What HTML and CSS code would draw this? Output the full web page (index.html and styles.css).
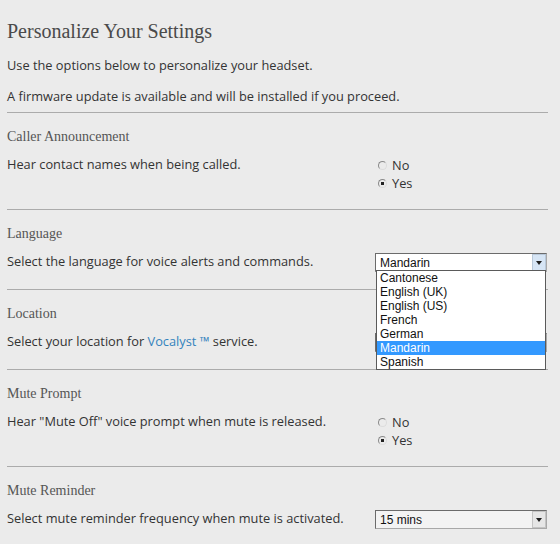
FILE: index.html
```html
<!DOCTYPE html>
<html lang="en">
<head>
  <meta charset="UTF-8">
  <title>Personalize Your Settings</title>
  <link rel="stylesheet" href="styles.css">
</head>
<body>
  <div class="page">

    <!-- Cabeçalho -->
    <div class="intro">
      <h1>Personalize Your Settings</h1>
      <p>Use the options below to personalize your headset.</p>
      <p>A firmware update is available and will be installed if you proceed.</p>
    </div>

    <!-- Caller Announcement -->
    <div class="setting">
      <h2>Caller Announcement</h2>
      <div class="setting-row">
        <span class="desc">Hear contact names when being called.</span>
        <div class="control radios">
          <label><input type="radio" name="caller"> No</label>
          <label><input type="radio" name="caller" checked> Yes</label>
        </div>
      </div>
    </div>

    <!-- Language -->
    <div class="setting">
      <h2>Language</h2>
      <div class="setting-row">
        <span class="desc">Select the language for voice alerts and commands.</span>
        <div class="control">
          <div class="select open">
            <span class="select-value">Mandarin</span>
            <span class="select-arrow"></span>
            <ul class="select-list">
              <li>Cantonese</li>
              <li>English (UK)</li>
              <li>English (US)</li>
              <li>French</li>
              <li>German</li>
              <li class="selected">Mandarin</li>
              <li>Spanish</li>
            </ul>
          </div>
        </div>
      </div>
    </div>

    <!-- Location (o select fica por baixo da lista aberta) -->
    <div class="setting">
      <h2>Location</h2>
      <div class="setting-row">
        <span class="desc">Select your location for <a href="#">Vocalyst ™</a> service.</span>
        <div class="control">
          <div class="select">
            <span class="select-value"></span>
            <span class="select-arrow"></span>
          </div>
        </div>
      </div>
    </div>

    <!-- Mute Prompt -->
    <div class="setting">
      <h2>Mute Prompt</h2>
      <div class="setting-row">
        <span class="desc">Hear "Mute Off" voice prompt when mute is released.</span>
        <div class="control radios">
          <label><input type="radio" name="mute-prompt"> No</label>
          <label><input type="radio" name="mute-prompt" checked> Yes</label>
        </div>
      </div>
    </div>

    <!-- Mute Reminder -->
    <div class="setting">
      <h2>Mute Reminder</h2>
      <div class="setting-row">
        <span class="desc">Select mute reminder frequency when mute is activated.</span>
        <div class="control">
          <div class="select plain">
            <span class="select-value">15 mins</span>
            <span class="select-arrow"></span>
          </div>
        </div>
      </div>
    </div>

  </div>
</body>
</html>
```

FILE: styles.css
```css
/* Estilos globais */
* {
  margin: 0;
  padding: 0;
  box-sizing: border-box;
}

body {
  background-color: #ebebeb;
  color: #333333;
  font-family: 'Open Sans', sans-serif;
  font-size: 12.8px;
  overflow: hidden;
}

.page {
  padding: 19px 12px 0 7px;
}

.intro {
  padding-bottom: 7px;
}

.intro h1 {
  font-family: 'Liberation Serif', serif;
  font-weight: normal;
  font-size: 20px;
  line-height: 24px;
  color: #4a4a4a;
  margin-bottom: 1px;
}

.intro p {
  line-height: 18px;
  margin-top: 13px;
}

.setting {
  border-top: 1px solid #ababab;
  padding: 15px 0 17px;
}

.setting h2 {
  font-family: 'Liberation Serif', serif;
  font-weight: normal;
  font-size: 14px;
  line-height: 18px;
  color: #555555;
}

.setting-row {
  display: flex;
  align-items: flex-start;
  margin-top: 9px;
}

.desc {
  width: 368px;
  line-height: 18px;
}

.desc a {
  color: #3483bd;
  text-decoration: none;
}

.control {
  width: 172px;
}

.radios {
  padding-top: 1px;
}

.radios label {
  display: flex;
  align-items: center;
  line-height: 18px;
}

.radios input {
  appearance: none;
  -webkit-appearance: none;
  width: 9px;
  height: 9px;
  margin: 1px 5px 0 3px;
  border-radius: 50%;
  border: 1px solid;
  border-color: #8a8a8a #dcdcdc #dcdcdc #8a8a8a;
}

.radios input:checked {
  background: radial-gradient(circle, #222222 1.5px, transparent 2px);
}

/* Select desenhado à mão */
.select {
  position: relative;
  display: flex;
  align-items: center;
  height: 19px;
  margin-top: 1px;
  padding-left: 4px;
  border: 1px solid;
  border-color: #6b6b6b #a8a8a8 #a8a8a8 #6b6b6b;
  background-color: #ffffff;
  font-family: 'Liberation Sans', sans-serif;
  font-size: 12px;
  color: #111111;
}

.select.plain {
  background-color: #f3f3f3;
}

.select-value {
  flex: 1;
}

.select-arrow {
  width: 14px;
  height: 100%;
  border: 1px solid #b9c9da;
  background-color: #d6e5f5;
  display: flex;
  align-items: center;
  justify-content: center;
}

.select.plain .select-arrow {
  border-color: #c4c4c4;
  background-color: #e6e6e6;
}

.select-arrow::after {
  content: "";
  border-left: 3px solid transparent;
  border-right: 3px solid transparent;
  border-top: 4px solid #1e1e1e;
}

.select-list {
  list-style: none;
  position: absolute;
  top: calc(100% - 1px);
  left: 0;
  width: 170px;
  border: 1px solid #5a5a5a;
  background-color: #ffffff;
  z-index: 5;
}

.select-list li {
  line-height: 14px;
  padding-left: 3px;
  color: #111111;
}

.select-list li.selected {
  background-color: #3399ff;
  color: #ffffff;
}
```
